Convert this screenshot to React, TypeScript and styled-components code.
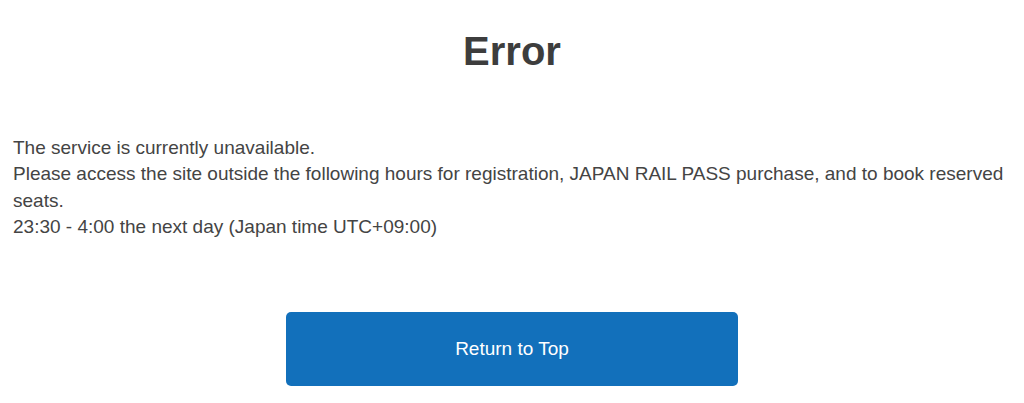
import React from "react";
import styled, { createGlobalStyle } from "styled-components";

const Global = createGlobalStyle`
  html, body { margin: 0; padding: 0; background: #fff; }
  body { font-family: "Liberation Sans", Arial, sans-serif; color: #444; }
`;

const Page = styled.main`
  padding: 0 13px;
  display: flex;
  flex-direction: column;
`;

const Title = styled.h1`
  margin: 27px 0 0;
  text-align: center;
  font-size: 40px;
  line-height: 48px;
  font-weight: 700;
  color: #3d3d3d;
`;

const Message = styled.p`
  margin: 60px 0 0;
  font-size: 19px;
  line-height: 26.3px;
  color: #444;
`;

const Actions = styled.div`
  display: flex;
  justify-content: center;
  margin-top: 72px;
`;

const Button = styled.a`
  display: flex;
  align-items: center;
  justify-content: center;
  width: 452px;
  height: 74px;
  border-radius: 5px;
  background: #1270bb;
  color: #fff;
  font-size: 19px;
  text-decoration: none;
`;

export default function App() {
  return (
    <>
      <Global />
      <Page>
        <Title>Error</Title>
        <Message>
          The service is currently unavailable.
          <br />
          Please access the site outside the following hours for registration, JAPAN RAIL PASS purchase, and to book reserved seats.
          <br />
          23:30 - 4:00 the next day (Japan time UTC+09:00)
        </Message>
        <Actions>
          <Button href="#">Return to Top</Button>
        </Actions>
      </Page>
    </>
  );
}
